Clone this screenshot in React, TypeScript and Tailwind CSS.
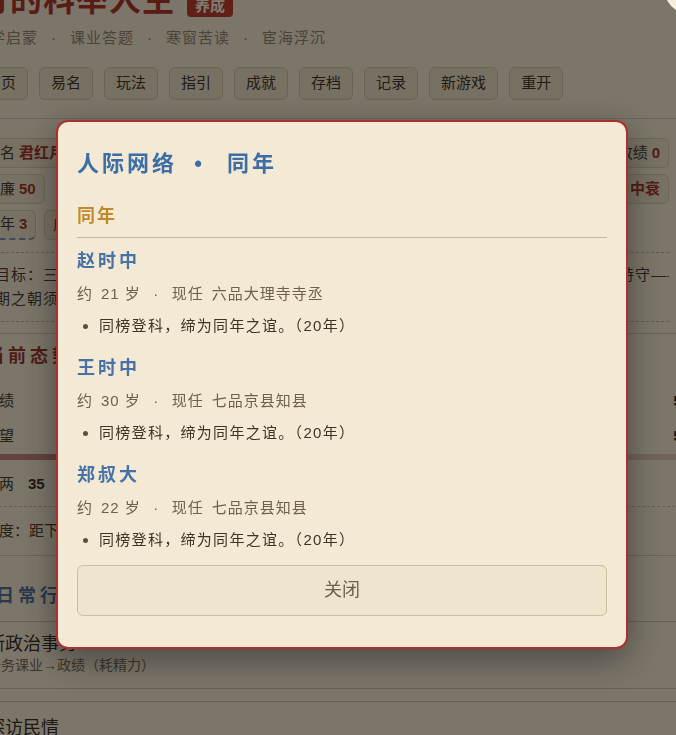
import React from "react";

const people = [
  { name: "赵时中", age: 21, post: "六品大理寺寺丞" },
  { name: "王时中", age: 30, post: "七品京县知县" },
  { name: "郑叔大", age: 22, post: "七品京县知县" },
];

const navButtons = ["首页", "易名", "玩法", "指引", "成就", "存档", "记录", "新游戏", "重开"];

function Chip({ label, value, dashed }: { label: string; value: string; dashed?: boolean }) {
  return (
    <div
      className={
        dashed
          ? "flex h-[30px] items-center gap-[4px] rounded-[6px] border border-[#dccdae] border-b-2 border-b-[#7f92b8] bg-[#f1e4c9] px-[8px] text-[15px] [border-bottom-style:dashed]"
          : "flex h-[30px] items-center gap-[4px] rounded-[6px] border border-[#dccdae] bg-[#f1e4c9] px-[8px] text-[15px]"
      }
    >
      <span className="text-[#4a3f30]">{label}</span>
      <span className="font-bold text-[#a33a2c]">{value}</span>
    </div>
  );
}

export default function App() {
  return (
    <div className="relative h-[735px] w-full overflow-hidden bg-[#f8ecd4] font-['Liberation_Sans','Noto_Sans_CJK_SC',sans-serif] text-[#3b3124]">
      {/* background page */}
      <div className="-ml-[26px] -mt-[22px] w-[716px]">
        <div className="-ml-[63px] flex h-[44px] items-center">
          <span className="text-[32px] font-bold leading-none tracking-[1px] text-[#b3382b]">君红月的科举人生</span>
          <span className="mb-[5px] ml-[12px] self-end rounded-[4px] bg-[#c0412e] px-[8px] text-[15px] font-bold leading-[22px] text-[#fff7ea]">
            养成
          </span>
        </div>

        <div className="mt-[4px] flex h-[24px] items-center text-[15px] tracking-[1px] text-[#94866f]">
          <span>幼学启蒙</span>
          <span className="w-[32px] text-center">·</span>
          <span>课业答题</span>
          <span className="w-[32px] text-center">·</span>
          <span>寒窗苦读</span>
          <span className="w-[32px] text-center">·</span>
          <span>宦海浮沉</span>
        </div>

        <div className="mt-[17px] flex gap-[11px]">
          {navButtons.map((b) => (
            <div
              key={b}
              className="flex h-[33px] items-center rounded-[6px] border border-[#d6c6a6] bg-[#efe2c6] px-[11px] text-[15px] text-[#43392b]"
            >
              {b}
            </div>
          ))}
        </div>

        {/* status card */}
        <div className="mt-[18px] border-y border-[#d8c8aa] pb-[11px] pl-[2px] pr-[21px] pt-[19px]">
          <div className="flex flex-col gap-[6px]">
            <div className="flex justify-between">
              <Chip label="姓名" value="君红月" />
              <Chip label="政绩" value="0" />
            </div>
            <div className="flex justify-between">
              <Chip label="清廉" value="50" />
              <Chip label="家境" value="中衰" />
            </div>
            <div className="flex gap-[8px]">
              <Chip label="同年" value="3" dashed />
              <Chip label="座师" value="1" />
            </div>
          </div>
          <div className="mt-[12px] border-y border-dashed border-[#c9b292] py-[10px] pl-[19px] text-[15px] tracking-[1px] text-[#4a3f30]">
            <div className="h-[24px] overflow-hidden whitespace-nowrap leading-[24px]">
              目标：三年考满之日，政绩须达上考，声望须过五十，家境不可再衰，清廉一节尤须谨慎持守——
            </div>
            <div className="h-[24px] overflow-hidden whitespace-nowrap leading-[24px]">期之朝须面圣述职，方得擢升。</div>
          </div>
        </div>

        {/* current situation */}
        <div className="border-b border-[#d8c8aa] pb-[12px]">
          <div className="mt-[9px] flex h-[26px] items-center pl-[12px] text-[18px] font-bold tracking-[4px] text-[#9b3b30]">
            当前态势
          </div>
          <div className="mt-[13px] flex h-[38px] items-center justify-between pl-[10px] text-[15px]">
            <span className="text-[#4a3f30]">政绩</span>
            <span className="font-bold text-[#3b3124]">58</span>
          </div>
          <div className="flex h-[32px] items-center justify-between pl-[10px] text-[15px]">
            <span className="text-[#4a3f30]">声望</span>
            <span className="font-bold text-[#3b3124]">52</span>
          </div>
          <div className="mt-[2px] h-[6px] w-full rounded-full bg-[#e2c7b6]">
            <div className="h-[6px] w-[60%] rounded-full bg-[#c9857a]" />
          </div>
          <div className="mt-[9px] flex h-[30px] items-center gap-[14px] pl-[10px] text-[15px]">
            <span className="text-[#4a3f30]">银两</span>
            <span className="font-bold text-[#3b3124]">35</span>
          </div>
          <div className="mt-[7px] border-t border-dashed border-[#cdbb9d]" />
          <div className="mt-[12px] flex h-[24px] items-center pl-[10px] text-[15px] text-[#4a3f30]">
            进度：距下次考满尚有二年，宜勤勉任事。
          </div>
        </div>

        {/* daily actions */}
        <div className="mt-[27px] flex h-[26px] items-center text-[18px] font-bold tracking-[4px] text-[#56739c]">
          每日常行
        </div>
        <div className="mt-[12px] border-y border-[#d2c2a4] pb-[13px] pl-[13px] pt-[11px]">
          <div className="h-[22px] text-[18px] leading-[22px] text-[#3b3124]">断政治事务</div>
          <div className="h-[20px] text-[14px] leading-[20px] text-[#7a6d58]">公务课业→政绩（耗精力）</div>
        </div>
        <div className="mt-[12px] border-t border-[#d2c2a4] pl-[13px] pt-[15px]">
          <div className="h-[22px] text-[18px] leading-[22px] text-[#3b3124]">探访民情</div>
          <div className="h-[20px] text-[14px] leading-[20px] text-[#7a6d58]">走访乡里→声望（耗精力）</div>
        </div>
      </div>

      {/* overlay */}
      <div className="fixed inset-0 bg-black/50" />

      {/* floating corner button */}
      <div className="fixed right-[-40px] top-[-38px] h-[52px] w-[52px] rounded-full bg-[#f6eedd]" />

      {/* modal */}
      <div className="fixed left-[56px] top-[120px] w-[572px] rounded-[12px] border-2 border-[#a8322f] bg-[#f3e9d5] px-[19px] pb-[31px] pt-[26px] shadow-[0_10px_36px_rgba(0,0,0,0.4)]">
        <div className="flex h-[30px] items-center text-[22px] font-bold tracking-[3px] text-[#3c6ea6]">
          <span>人际网络</span>
          <span className="inline-block w-[50px] pr-[8px] text-center tracking-normal">•</span>
          <span>同年</span>
        </div>
        <div className="mt-[25px] border-b border-[#c8b896] pb-[8px]">
          <div className="flex h-[26px] items-center text-[18px] font-bold tracking-[2px] text-[#c08a2a]">同年</div>
        </div>
        <div className="mt-[10px] flex flex-col gap-[17px]">
          {people.map((p) => (
            <div key={p.name}>
              <div className="flex h-[26px] items-center text-[18px] font-bold tracking-[3px] text-[#4672a8]">{p.name}</div>
              <div className="mt-[8px] flex h-[24px] items-center text-[15px] tracking-[1px] text-[#6e604c]">
                <span>约</span>
                <span className="ml-[8px]">{p.age}</span>
                <span className="ml-[5px]">岁</span>
                <span className="w-[31px] text-center">·</span>
                <span>现任</span>
                <span className="ml-[8px]">{p.post}</span>
              </div>
              <ul className="mt-[8px] list-disc pl-[22px] text-[15px] tracking-[1.3px] text-[#3e3324] marker:text-[#5a4e3e]">
                <li className="h-[24px] leading-[24px]">同榜登科，缔为同年之谊。（20年）</li>
              </ul>
            </div>
          ))}
        </div>
        <button className="mt-[13px] flex h-[51px] w-full items-center justify-center rounded-[6px] border border-[#cbbf9f] bg-[#efe5cf] text-[18px] text-[#6a5f4f]">
          关闭
        </button>
      </div>
    </div>
  );
}
